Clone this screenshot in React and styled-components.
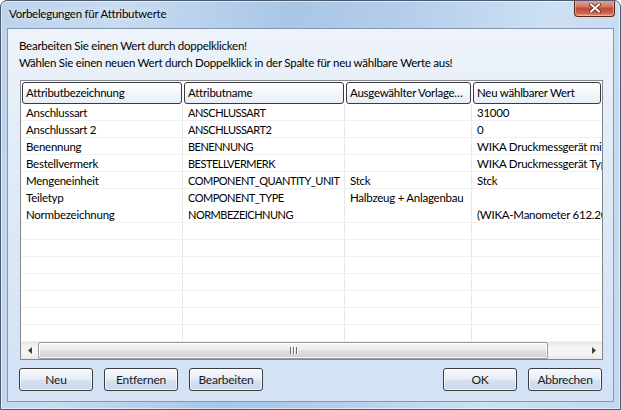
import styled, { createGlobalStyle } from 'styled-components';

const GlobalStyle = createGlobalStyle`
  html, body {
    margin: 0;
    padding: 0;
    background: #ffffff;
  }
  body {
    font-family: 'Lato', 'Liberation Sans', sans-serif;
    font-size: 11.5px;
    letter-spacing: -0.25px;
    color: #000;
  }
`;

const COLS = '162px 162px 127px 1fr';

const Window = styled.div`
  width: 621px;
  height: 410px;
  box-sizing: border-box;
  display: flex;
  flex-direction: column;
  border: 1px solid #4b5a6e;
  border-radius: 7px 7px 0 0;
  background: linear-gradient(100deg, #bdd3ec 0%, #c7dbf1 18%, #a9c6e7 42%, #b4cdea 58%, #cde0f4 80%, #c2d8ef 100%);
  box-shadow: inset 0 0 0 1px rgba(255, 255, 255, 0.55);
  overflow: hidden;
`;

const TitleBar = styled.div`
  height: 27px;
  display: flex;
  justify-content: space-between;
  align-items: flex-start;
`;

const Title = styled.div`
  padding: 6px 0 0 8px;
  color: #000;
  text-shadow: 0 0 6px rgba(255, 255, 255, 0.9);
`;

const CloseButton = styled.div`
  width: 41px;
  height: 17px;
  margin: -1px 5px 0 0;
  box-sizing: border-box;
  display: flex;
  align-items: center;
  justify-content: center;
  border: 1px solid #5e2118;
  border-top: none;
  border-radius: 0 0 4px 4px;
  background: linear-gradient(180deg, #e4a699 0%, #d27b6a 40%, #bf4a34 52%, #c9614a 80%, #e09a7f 100%);
  box-shadow: inset 0 0 0 1px rgba(255, 220, 210, 0.45);
`;

const Client = styled.div`
  flex: 1;
  margin: 0 6px 7px 6px;
  border: 1px solid #8399b5;
  background: linear-gradient(180deg, #eef3fa 0%, #e3ecf7 30%, #d8e6f6 70%, #d3e2f5 100%);
  display: flex;
  flex-direction: column;
  padding: 8px 11px 10px 11px;
`;

const Info = styled.div`
  line-height: 17px;
`;

const Table = styled.div`
  height: 280px;
  box-sizing: border-box;
  margin: 9px -1px 0 1px;
  padding-top: 1px;
  border: 1px solid #828790;
  background: #fff;
  display: flex;
  flex-direction: column;
`;

const HeaderRow = styled.div`
  display: grid;
  grid-template-columns: ${COLS};
  height: 22px;
`;

const HeadCell = styled.div`
  margin: 0 1px;
  box-sizing: border-box;
  height: 22px;
  padding: 0 3px;
  line-height: 20px;
  border: 1px solid #3a3a3a;
  border-radius: 3px;
  background: linear-gradient(180deg, #ffffff 0%, #f4f8fc 45%, #e6eef8 100%);
  white-space: nowrap;
  overflow: hidden;
`;

const Body = styled.div`
  flex: 1;
  overflow: hidden;
`;

const Row = styled.div`
  display: grid;
  grid-template-columns: ${COLS};
  height: 17px;
`;

const Cell = styled.div`
  box-sizing: border-box;
  height: 17px;
  padding: 0 5px;
  line-height: 17px;
  white-space: nowrap;
  overflow: hidden;
  font-size: ${p => (p.$caps ? '11px' : 'inherit')};
  letter-spacing: ${p => (p.$caps ? '-0.5px' : 'inherit')};
  border-right: ${p => (p.$last ? 'none' : '1px solid #e8e8e8')};
  border-bottom: 1px solid ${p => (p.$noLine ? '#ffffff' : '#f0f0f0')};
`;

const ScrollBar = styled.div`
  height: 17px;
  display: flex;
  align-items: stretch;
  background: linear-gradient(180deg, #e6e6e6 0%, #f4f4f4 30%, #f4f4f4 70%, #eaeaea 100%);
`;

const ArrowButton = styled.div`
  width: 17px;
  display: flex;
  align-items: center;
  justify-content: center;
`;

const Track = styled.div`
  flex: 1;
  display: flex;
  align-items: stretch;
  padding: 0 37px 0 0;
`;

const Thumb = styled.div`
  flex: 1;
  box-sizing: border-box;
  border: 1px solid #9a9a9a;
  border-radius: 2px;
  background: linear-gradient(180deg, #f6f6f6 0%, #ececec 45%, #dcdcdc 55%, #d2d2d2 100%);
  box-shadow: inset 0 0 0 1px rgba(255, 255, 255, 0.8);
  display: flex;
  align-items: center;
  justify-content: center;
`;

const Grip = styled.div`
  display: flex;
  gap: 2px;
  span {
    width: 1px;
    height: 7px;
    background: #6a6a6a;
    box-shadow: 1px 0 0 #fff;
  }
`;

const ButtonRow = styled.div`
  margin-top: 8px;
  display: flex;
  gap: 11px;
`;

const Spacer = styled.div`
  flex: 1;
`;

const Button = styled.div`
  width: 74px;
  height: 23px;
  box-sizing: border-box;
  border: 1px solid #3c3c3c;
  border-radius: 3px;
  background: linear-gradient(180deg, #f6f8fc 0%, #e9eff8 45%, #d6e2f2 55%, #c8d7ec 100%);
  box-shadow: inset 0 0 0 1px rgba(255, 255, 255, 0.7);
  display: flex;
  align-items: center;
  justify-content: center;
  font-size: 12px;
  color: #1b1b1b;
`;

const data = [
  ['Anschlussart', 'ANSCHLUSSART', '', '31000'],
  ['Anschlussart 2', 'ANSCHLUSSART2', '', '0'],
  ['Benennung', 'BENENNUNG', '', 'WIKA Druckmessgerät mit'],
  ['Bestellvermerk', 'BESTELLVERMERK', '', 'WIKA Druckmessgerät Typ'],
  ['Mengeneinheit', 'COMPONENT_QUANTITY_UNIT', 'Stck', 'Stck'],
  ['Teiletyp', 'COMPONENT_TYPE', 'Halbzeug + Anlagenbau', ''],
  ['Normbezeichnung', 'NORMBEZEICHNUNG', '', '(WIKA-Manometer 612.20'],
];

const rows = [...data, ...Array.from({ length: 7 }, () => ['', '', '', ''])];

const CloseIcon = () => (
  <svg width="12" height="10" viewBox="0 0 12 10">
    <path d="M2 1.5 L10 8.5 M10 1.5 L2 8.5" stroke="#5a2016" strokeWidth="3.6" strokeLinecap="square" />
    <path d="M2 1.5 L10 8.5 M10 1.5 L2 8.5" stroke="#ffffff" strokeWidth="2" strokeLinecap="square" />
  </svg>
);

const Arrow = ({ dir }) => (
  <svg width="4" height="7" viewBox="0 0 4 7">
    {dir === 'left' ? <path d="M4 0 L0 3.5 L4 7 Z" fill="#404040" /> : <path d="M0 0 L4 3.5 L0 7 Z" fill="#404040" />}
  </svg>
);

export default function App() {
  return (
    <>
      <GlobalStyle />
      <Window>
        <TitleBar>
          <Title>Vorbelegungen für Attributwerte</Title>
          <CloseButton>
            <CloseIcon />
          </CloseButton>
        </TitleBar>
        <Client>
          <Info>
            <div>Bearbeiten Sie einen Wert durch doppelklicken!</div>
            <div>Wählen Sie einen neuen Wert durch Doppelklick in der Spalte für neu wählbare Werte aus!</div>
          </Info>
          <Table>
            <HeaderRow>
              <HeadCell>Attributbezeichnung</HeadCell>
              <HeadCell>Attributname</HeadCell>
              <HeadCell>Ausgewählter Vorlage…</HeadCell>
              <HeadCell>Neu wählbarer Wert</HeadCell>
            </HeaderRow>
            <Body>
              {rows.map((r, i) => (
                <Row key={i}>
                  {r.map((c, j) => (
                    <Cell key={j} $last={j === 3} $caps={j === 1} $noLine={i === 5}>
                      {c}
                    </Cell>
                  ))}
                </Row>
              ))}
            </Body>
            <ScrollBar>
              <ArrowButton>
                <Arrow dir="left" />
              </ArrowButton>
              <Track>
                <Thumb>
                  <Grip>
                    <span />
                    <span />
                    <span />
                  </Grip>
                </Thumb>
              </Track>
              <ArrowButton>
                <Arrow dir="right" />
              </ArrowButton>
            </ScrollBar>
          </Table>
          <ButtonRow>
            <Button>Neu</Button>
            <Button>Entfernen</Button>
            <Button>Bearbeiten</Button>
            <Spacer />
            <Button>OK</Button>
            <Button>Abbrechen</Button>
          </ButtonRow>
        </Client>
      </Window>
    </>
  );
}
